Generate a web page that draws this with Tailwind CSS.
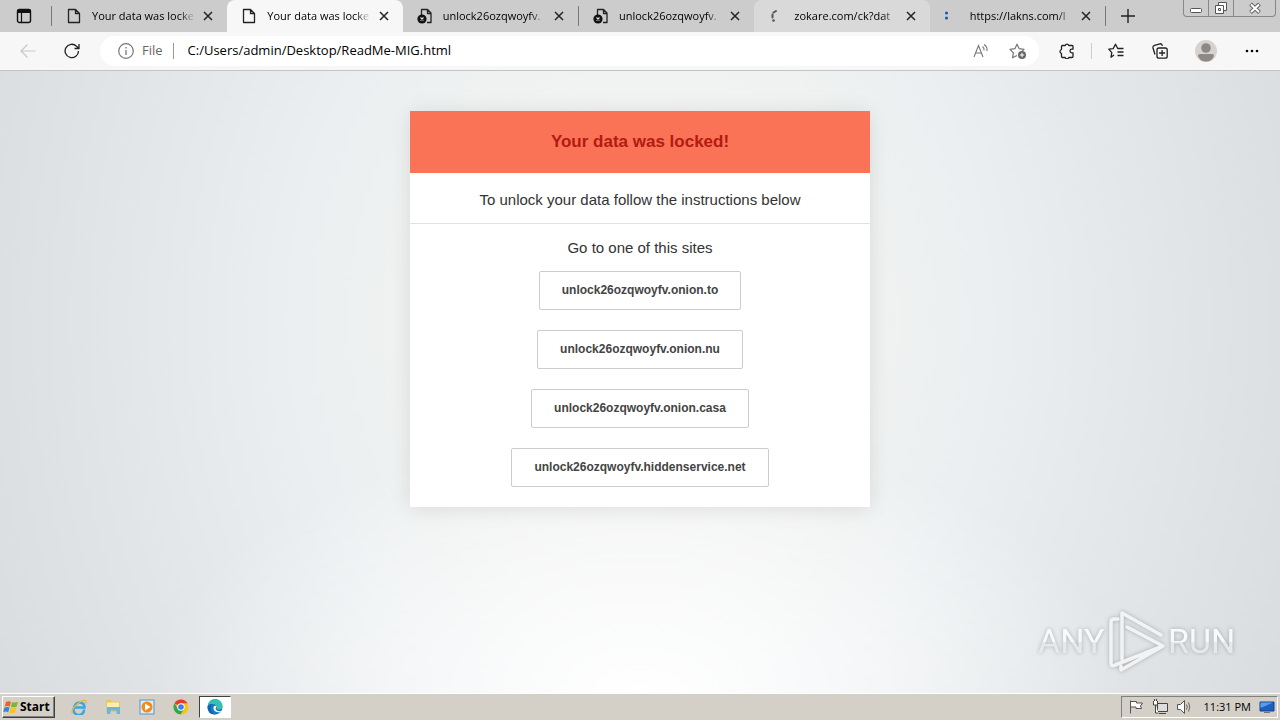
<!DOCTYPE html>
<html lang="en">
<head>
  <meta charset="UTF-8" />
  <meta name="viewport" content="width=device-width, initial-scale=1.0"/>
  <title>Your data was locked!</title>
  <script src="https://cdn.jsdelivr.net/npm/@tailwindcss/browser@4"></script>
</head>
<body class="flex h-screen flex-col overflow-hidden bg-[#d4d0c8] font-['Open_Sans',sans-serif] text-black antialiased">

  <svg class="hidden">
    <symbol id="page" viewBox="0 0 16 16"><path d="M2.5 1.5h7l4 4v9h-11zM9.5 1.5v4h4" fill="none" stroke="#222" stroke-width="1.3" stroke-linejoin="round"/></symbol>
    <symbol id="page-error" viewBox="0 0 16 16">
      <path d="M4.5 7V1.5h6l3.5 3.5v9.5h-4M10.5 1.5v4h3.5" fill="none" stroke="#222" stroke-width="1.3" stroke-linejoin="round"/>
      <circle cx="5" cy="11" r="4.6" fill="#111"/><path d="M3.5 9.5l3 3M6.5 9.5l-3 3" stroke="#ddd" stroke-width="1.2"/>
    </symbol>
    <symbol id="close" viewBox="0 0 10 10"><path d="M1 1l8 8M9 1l-8 8" stroke="#222" stroke-width="1.5"/></symbol>
  </svg>

  <!-- Tab strip -->
  <header class="flex h-8 shrink-0 items-stretch bg-[#ccc] text-[11px]">
    <button aria-label="Tab actions" class="flex w-[51px] items-center justify-center pr-1">
      <svg class="size-4" viewBox="0 0 16 16"><rect x="1.5" y="1.5" width="13" height="13" rx="2" fill="none" stroke="#111" stroke-width="1.4"/><path d="M1 3a2 2 0 012-2h10a2 2 0 012 2v2H1z" fill="#111"/><path d="M5.5 5v9" stroke="#111" stroke-width="1.2"/></svg>
    </button>
    <span class="my-1.5 w-px bg-[#777]"></span>
    <nav class="flex w-[1053px] min-w-0">
      <div class="flex min-w-0 flex-1 items-center px-3.5">
        <svg class="size-4 shrink-0"><use href="#page"/></svg>
        <a href="#" class="ml-2.5 min-w-0 flex-1 whitespace-nowrap mask-r-from-85%">Your data was locke</a>
        <button aria-label="Close tab" class="ml-2"><svg class="size-2.5"><use href="#close"/></svg></button>
      </div>
      <div class="flex min-w-0 flex-1 items-center rounded-t-lg bg-[#f7f7f7] px-3.5">
        <svg class="size-4 shrink-0"><use href="#page"/></svg>
        <a href="#" class="ml-2.5 min-w-0 flex-1 whitespace-nowrap mask-r-from-85%">Your data was locke</a>
        <button aria-label="Close tab" class="ml-2"><svg class="size-2.5"><use href="#close"/></svg></button>
      </div>
      <div class="flex min-w-0 flex-1 items-center px-3.5">
        <svg class="size-4 shrink-0"><use href="#page-error"/></svg>
        <a href="#" class="ml-2.5 min-w-0 flex-1 whitespace-nowrap mask-r-from-85%">unlock26ozqwoyfv.</a>
        <button aria-label="Close tab" class="ml-2"><svg class="size-2.5"><use href="#close"/></svg></button>
      </div>
      <span class="my-1.5 w-px bg-[#777]"></span>
      <div class="flex min-w-0 flex-1 items-center px-3.5">
        <svg class="size-4 shrink-0"><use href="#page-error"/></svg>
        <a href="#" class="ml-2.5 min-w-0 flex-1 whitespace-nowrap mask-r-from-85%">unlock26ozqwoyfv.</a>
        <button aria-label="Close tab" class="ml-2"><svg class="size-2.5"><use href="#close"/></svg></button>
      </div>
      <div class="flex min-w-0 flex-1 items-center rounded-t-lg bg-[#d9d9d9] px-3.5">
        <svg class="size-4 shrink-0" viewBox="0 0 16 16"><path d="M8 3L5.5 4.5M4.5 6.5v3" stroke="#555" stroke-width="2" stroke-linecap="round"/><circle cx="5.5" cy="12.5" r="1.3" fill="#555"/></svg>
        <a href="#" class="ml-2.5 min-w-0 flex-1 whitespace-nowrap mask-r-from-85%">zokare.com/ck?dat</a>
        <button aria-label="Close tab" class="ml-2"><svg class="size-2.5"><use href="#close"/></svg></button>
      </div>
      <div class="flex min-w-0 flex-1 items-center px-3.5">
        <svg class="size-4 shrink-0" viewBox="0 0 16 16"><circle cx="2.5" cy="5" r="1.5" fill="#0b5cad"/><circle cx="2.5" cy="10" r="1.5" fill="#0b5cad"/></svg>
        <a href="#" class="ml-2.5 min-w-0 flex-1 whitespace-nowrap mask-r-from-85%">https://lakns.com/l</a>
        <button aria-label="Close tab" class="ml-2"><svg class="size-2.5"><use href="#close"/></svg></button>
      </div>
    </nav>
    <span class="my-1.5 w-px bg-[#777]"></span>
    <button aria-label="New tab" class="flex w-11 items-center justify-center">
      <svg class="size-4" viewBox="0 0 16 16"><path d="M8 1v14M1 8h14" stroke="#222" stroke-width="1.4"/></svg>
    </button>
    <div class="mr-1 ml-auto flex h-[17px] overflow-hidden rounded-b border border-t-0 border-[#888]">
      <button aria-label="Minimize" class="flex w-[25px] items-center justify-center border-r border-[#888]">
        <svg class="size-4" viewBox="0 0 16 16"><rect x="2.5" y="8.5" width="11" height="4" rx="1" fill="#fff" stroke="#555"/></svg>
      </button>
      <button aria-label="Restore" class="flex w-[25px] items-center justify-center border-r border-[#888]">
        <svg class="size-4" viewBox="0 0 16 16"><path d="M5.5 2.5h8v8h-8z" fill="#fff" stroke="#555"/><path d="M2.5 5.5h8v8h-8zM5.5 8.500h2v2h-2z" fill="#fff" stroke="#555"/></svg>
      </button>
      <button aria-label="Close" class="flex w-[41px] items-center justify-center">
        <svg class="size-4" viewBox="0 0 16 16"><path d="M3.5 4l9 8.500M12.5 4l-9 8.500" stroke="#666" stroke-width="4"/><path d="M4 4.500l8 7.500M12 4.500l-8 7.500" stroke="#fff" stroke-width="2"/></svg>
      </button>
    </div>
  </header>

  <!-- Toolbar -->
  <div class="flex h-[39px] shrink-0 items-center border-b border-[#c4c4c4] bg-[#f7f7f7]">
    <button aria-label="Back" class="ml-5"><svg class="size-4" viewBox="0 0 16 16"><path d="M15.5 8H1M7.5 1.5L1 8l6.5 6.5" fill="none" stroke="#c8c8c8" stroke-width="1.2"/></svg></button>
    <button aria-label="Refresh" class="ml-7"><svg class="size-4" viewBox="0 0 16 16"><path d="M14.5 8a6.7 6.7 0 11-2-4.8L15 5.5M15 1v4.5h-4.5" fill="none" stroke="#222" stroke-width="1.3"/></svg></button>
    <div class="ml-5 flex h-[30px] min-w-0 flex-1 items-center rounded-full bg-white pr-3 pl-[18px] text-[13px]">
      <svg class="size-4 shrink-0" viewBox="0 0 16 16"><circle cx="8" cy="8" r="7.3" fill="none" stroke="#777" stroke-width="1.2"/><path d="M8 7v5M8 4v1.500" stroke="#777" stroke-width="1.3"/></svg>
      <span class="ml-2 text-[#666]">File</span>
      <span class="ml-2.5 h-4 w-px bg-[#999]"></span>
      <input type="text" aria-label="Address" value="C:/Users/admin/Desktop/ReadMe-MIG.html" class="ml-3.5 min-w-0 flex-1 bg-transparent outline-none"/>
      <button aria-label="Read aloud"><svg class="size-4" viewBox="0 0 16 16"><path d="M1 14L5.500 2.500 10 14M2.500 10h6M9.500 3.500a4 4 0 011.500 4M11 1.500a6.500 6.500 0 013 6.500" fill="none" stroke="#777" stroke-width="1.1"/></svg></button>
      <button aria-label="Add to favorites" class="ml-5"><svg class="h-4 w-[18px]" viewBox="0 0 18 16"><path d="M8 12.500l-4.500 2.300.9-4.900L1 6.400l4.900-.7L8 1.200l2.200 4.500 4.800.7-2 2" fill="none" stroke="#777" stroke-width="1.2" stroke-linejoin="round"/><circle cx="13" cy="12" r="4" fill="#666"/><path d="M13 9.800v4.400M10.800 12h4.400" stroke="#fff"/></svg></button>
    </div>
    <button aria-label="Extensions" class="ml-5"><svg class="size-4" viewBox="0 0 16 16"><path d="M3.500 2.500h2.700a1.900 1.900 0 013.600 0H13q1 0 1 1v2.700h-1.200a1.800 1.800 0 000 3.600H14v3.700q0 1-1 1H9.800a1.900 1.900 0 01-3.600 0H3.500q-1 0-1-1v-3a2.100 2.100 0 010-4v-3q0-1 1-1z" fill="none" stroke="#222" stroke-width="1.3" stroke-linejoin="round"/></svg></button>
    <span class="ml-4 h-4 w-px bg-[#ccc]"></span>
    <button aria-label="Favorites" class="ml-4"><svg class="size-4" viewBox="0 0 16 16"><path d="M6 12l-3 2.200.8-4.500L.8 6.200l4.400-.6L7.500 1.200l2.200 4.300H15.500M9.500 9h6M9.500 12.500h6" fill="none" stroke="#222" stroke-width="1.3" stroke-linejoin="round"/></svg></button>
    <button aria-label="Collections" class="ml-7"><svg class="size-4" viewBox="0 0 16 16"><rect x="5" y="5" width="10.2" height="10.2" rx="2" fill="none" stroke="#222" stroke-width="1.3"/><path d="M10.100 7v6M7.100 10h6M3 11.500L1 5Q.6 3 2.500 2.300l5.500-1.500q1.800-.4 2.500 2" fill="none" stroke="#222" stroke-width="1.3"/></svg></button>
    <button aria-label="Profile" class="ml-[26px]"><svg class="size-6" viewBox="0 0 24 24"><circle cx="12" cy="12" r="11" fill="#d5d2d0"/><circle cx="12" cy="9" r="4.8" fill="#8d8987"/><path d="M4 17q0-2 2-2h12q2 0 2 2-2 5.500-8 5.500T4 17z" fill="#8d8987"/></svg></button>
    <button aria-label="Settings and more" class="mr-5 ml-[26px]"><svg class="size-4" viewBox="0 0 16 16"><circle cx="3" cy="8" r="1.3"/><circle cx="8" cy="8" r="1.3"/><circle cx="13" cy="8" r="1.3"/></svg></button>
  </div>

  <!-- Page -->
  <main class="relative min-h-0 flex-1 bg-[radial-gradient(ellipse_38%_42%_at_50%_100%,#fff_0%,#ffffff00_100%),radial-gradient(ellipse_56%_140%_at_50%_40%,#f5f5f5_0%,#f0f2f1_33%,#ebeff1_48%,#d8dcde_100%)] pt-10 font-['Liberation_Sans',sans-serif]">
    <section class="mx-auto w-[460px] bg-white pb-5 text-center text-[15px] text-[#333] shadow-[0_2px_20px_rgba(0,0,0,0.1)]">
      <h1 class="bg-[#fb7356] py-[17px] text-[17px] leading-7 font-bold text-[#b31a12]">Your data was locked!</h1>
      <p class="border-b border-[#e2e2e2] pt-4 pb-3 leading-[22px]">To unlock your data follow the instructions below</p>
      <p class="py-3 leading-[23px]">Go to one of this sites</p>
      <div class="flex flex-col items-center gap-5 text-xs font-bold text-[#444]">
        <a href="#" class="rounded-xs border border-[#ccc] px-[22px] pt-[9px] pb-2.5 leading-[18px]">unlock26ozqwoyfv.onion.to</a>
        <a href="#" class="rounded-xs border border-[#ccc] px-[22px] pt-[9px] pb-2.5 leading-[18px]">unlock26ozqwoyfv.onion.nu</a>
        <a href="#" class="rounded-xs border border-[#ccc] px-[22px] pt-[9px] pb-2.5 leading-[18px]">unlock26ozqwoyfv.onion.casa</a>
        <a href="#" class="rounded-xs border border-[#ccc] px-[22px] pt-[9px] pb-2.5 leading-[18px]">unlock26ozqwoyfv.hiddenservice.net</a>
      </div>
    </section>

    <!-- Watermark -->
    <svg class="absolute right-10 bottom-4 h-[70px] w-[208px] drop-shadow-[0_0_2px_rgba(0,0,0,0.25)]" viewBox="0 0 208 70" font-family="Roboto, sans-serif" font-size="34">
      <defs>
        <linearGradient id="shine" gradientUnits="userSpaceOnUse" x1="0" y1="0" x2="0" y2="70"><stop offset=".5" stop-color="#f8f9fa"/><stop offset=".5" stop-color="#e6e8e9"/></linearGradient>
      </defs>
      <text x="6" y="46" fill="url(#shine)">ANY</text>
      <text x="136" y="46" fill="url(#shine)">RUN</text>
      <path d="M86 12h-4q-3 0-3 4v40q0 4 4 2l48-19-36-19M90 52V6l39 22M89 59v4l42-24" fill="none" stroke="#f1f3f4" stroke-width="3.5" stroke-linejoin="round" stroke-linecap="round"/>
    </svg>
  </main>

  <!-- Taskbar -->
  <footer class="flex h-[27px] shrink-0 items-center border-t border-white bg-[#d4d0c8] px-0.5 text-[11px]">
    <button class="flex h-[22px] items-center gap-px border border-t-white border-r-[#404040] border-b-[#404040] border-l-white pr-1 text-xs font-bold shadow-[inset_-1px_-1px_#808080]">
      <svg class="size-4" viewBox="0 0 16 16"><path d="M3 3q2-1.500 5-.3L6.800 7.500Q4 6.300 1.800 7.600z" fill="#f0602a"/><path d="M9 3.200q3 1 6-.4l-1.400 4.900q-3 1.200-5.700.2z" fill="#7cb82f"/><path d="M1.500 8.600q2.200-1.300 5-.1l-1.300 4.700Q2.600 12 .2 13.300z" fill="#2f87d8"/><path d="M7.600 9q2.900 1 5.700-.2L12 13.500q-3 1.300-5.700.2z" fill="#fcc21b"/></svg>
      Start
    </button>
    <div class="ml-4 flex items-center gap-[18px]">
      <button aria-label="Internet Explorer"><svg class="size-4" viewBox="0 0 16 16"><path d="M13 10.500A5.200 5.200 0 113.200 8.500H13.500Q13.500 3.500 8.300 3.500 4 4 3.200 8.500" fill="none" stroke="#3aa6e4" stroke-width="2.5"/><path d="M1.500 14.500C-1 11 9 .5 14.500 1.500q1.300.5.3 3" fill="none" stroke="#e6b73a" stroke-width="1.3"/></svg></button>
      <button aria-label="Explorer"><svg class="size-4" viewBox="0 0 16 16"><path d="M1 1h5l1 1.500h8V13H1z" fill="#e9c75f"/><path d="M2 3.500h12v5H2z" fill="#fbeeb0"/><path d="M2 8h13v7h-3.500v-3.500h-6V15H2z" fill="#6ab6dc"/></svg></button>
      <button aria-label="Media Player"><svg class="size-4" viewBox="0 0 16 16"><rect x="1" y="1" width="14" height="14" fill="#d9ecfa" stroke="#5893c4"/><circle cx="8" cy="8" r="5.5" fill="#f28a1c"/><path d="M6 4.500L11.500 8 6 11.500z" fill="#fff"/></svg></button>
      <button aria-label="Chrome"><svg class="size-4" viewBox="0 0 16 16"><circle cx="8" cy="8" r="7.5" fill="#fbc116"/><path d="M8 8L1.500 4.200A7.500 7.500 0 0114.500 4.300H8z" fill="#e33b2e"/><path d="M1.500 4.200A7.500 7.500 0 007.500 15.500L11.200 9.800 8 8 4.800 9.800z" fill="#2da94f"/><circle cx="8" cy="8" r="3.7" fill="#fff"/><circle cx="8" cy="8" r="2.8" fill="#3b7ded"/></svg></button>
    </div>
    <button aria-label="Edge" class="ml-2.5 flex h-[22px] w-8 items-center justify-center border border-t-[#404040] border-r-white border-b-white border-l-[#404040] bg-white"><svg class="size-4" viewBox="0 0 16 16"><circle cx="8" cy="8" r="7.5" fill="#1878c9"/><path d="M.7 7A7.400 7.400 0 0115.500 7.500q0 3-3.500 3-2.500 0-2.500-1 .8-1 .3-2.200Q8.500 5 5.500 5 2 5 .7 7z" fill="#35c1b1"/><path d="M6.500 8q-1 5 6.500 5.500l1.300-1.300Q9 13 8.500 9.300L9.700 7.500Q8 6 6.500 8z" fill="#fff"/><path d="M.5 8Q1.500 4.800 5.500 5 2.500 7 4 11t5 4.400Q.5 16 .5 8z" fill="#1262ad"/></svg></button>
    <div class="ml-auto flex h-[22px] items-center border border-t-[#808080] border-r-white border-b-white border-l-[#808080] pr-0.5 pl-1.5">
      <svg class="size-4" viewBox="0 0 16 16"><path d="M2.500 1.500v13M2.500 2.500h6v1.500h6l-2 3 1 2.500H8V8H2.500" fill="#fff" stroke="#555"/></svg>
      <svg class="ml-2 size-4" viewBox="0 0 16 16"><path d="M5.500 4.500h10v8h-10zM7 14.500h7" fill="#ddd" stroke="#444"/><path d="M1.500 2v4h4V2M2.500 0v2M4.500 0v2M3.500 6v8h3" fill="#fff" stroke="#444"/></svg>
      <svg class="ml-2 size-4" viewBox="0 0 16 16"><path d="M1.500 5.500h3l4-4v13l-4-4h-3z" fill="#fff" stroke="#555"/><path d="M10.500 5.500q1.500 2.500 0 5M12.500 3.500q2.500 4.500 0 9" fill="none" stroke="#666"/></svg>
      <span class="ml-3">11:31 PM</span>
      <svg class="ml-2 size-4" viewBox="0 0 16 16"><path d="M1 3h14v9H1z" fill="#1d5fc0" stroke="#134487"/><path d="M1.500 3.500H14L1.500 9z" fill="#5b9cea"/><path d="M5 13.500h6" stroke="#777"/></svg>
    </div>
  </footer>

</body>
</html>
